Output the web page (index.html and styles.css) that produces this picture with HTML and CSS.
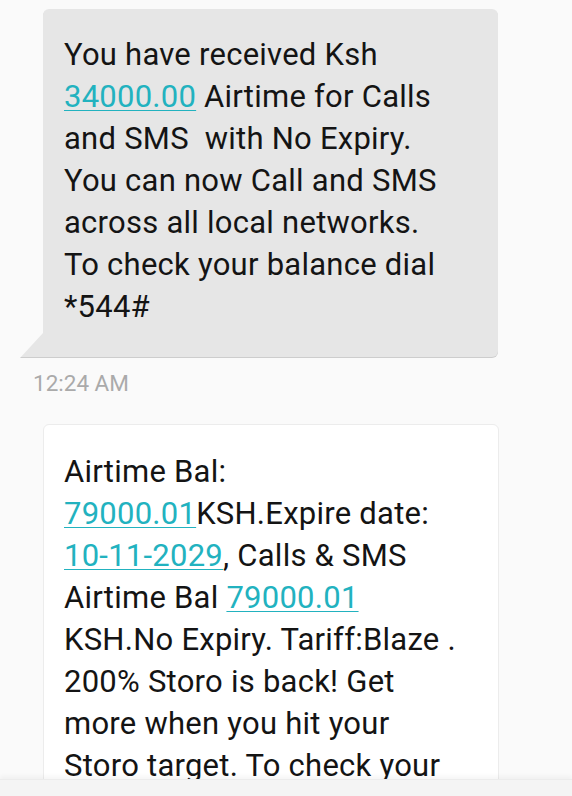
FILE: index.html
```html
<!DOCTYPE html>
<html>
<head>
<meta charset="utf-8">
<link rel="stylesheet" href="styles.css">
</head>
<body>
<div class="screen">
  <div class="thread">
    <div class="bubble bubble-grey">
      <p class="text">You have received Ksh<br><a class="link">34000.00</a> Airtime for Calls<br>and SMS&nbsp; with No Expiry.<br>You can now Call and SMS<br>across all local networks.<br>To check your balance dial<br>*544#</p>
    </div>
    <div class="time">12:24 AM</div>
    <div class="bubble bubble-white">
      <p class="text">Airtime Bal:<br><a class="link">79000.01</a>KSH.Expire date:<br><a class="link">10-11-2029</a>, Calls &amp; SMS<br>Airtime Bal <a class="link">79000.01</a><br>KSH.No Expiry. Tariff:Blaze .<br>200% Storo is back! Get<br>more when you hit your<br>Storo target. To check your<br>balance dial *544#</p>
    </div>
  </div>
  <div class="bar"></div>
</div>
</body>
</html>
```
FILE: styles.css
```css
html, body {
  margin: 0;
  padding: 0;
  background: #fafafa;
}
.screen {
  width: 572px;
  height: 796px;
  display: flex;
  flex-direction: column;
  overflow: hidden;
  font-family: Roboto, "Noto Sans", sans-serif;
}
.thread {
  flex: 1;
  overflow: hidden;
  padding-top: 9px;
  display: flex;
  flex-direction: column;
}
.bubble {
  position: relative;
  margin-left: 43px;
  width: 455px;
  box-sizing: border-box;
  border-radius: 6px;
  flex: none;
}
.bubble-grey {
  background: #e6e6e6;
  border-bottom-left-radius: 0;
  box-shadow: 0 1px 0 #cdcdcd;
  padding: 25px 10px 29px 21px;
}
.bubble-grey::before {
  content: "";
  position: absolute;
  left: -23px;
  bottom: -1px;
  width: 23px;
  height: 25px;
  background: linear-gradient(to top, #cdcdcd 1px, #e6e6e6 1px);
  clip-path: polygon(100% 0, 100% 100%, 0 100%);
}
.bubble-white {
  background: #ffffff;
  border: 1px solid #ececec;
  margin-left: 43px;
  width: 456px;
  padding: 26px 10px 20px 20px;
}
.text {
  margin: 0;
  font-size: 31px;
  line-height: 42px;
  letter-spacing: 0.25px;
  color: #141414;
  white-space: nowrap;
}
.link {
  color: #22b2bf;
  text-decoration: underline;
  text-decoration-thickness: 1px;
  text-underline-offset: 3px;
}
.time {
  margin: 14px 0 29px 33px;
  font-size: 22.5px;
  line-height: 24px;
  color: #aaaaaa;
  flex: none;
}
.bar {
  height: 16px;
  flex: none;
  background: #f4f4f4;
  box-shadow: 0 -3px 4px rgba(0,0,0,0.04);
  border-top: 1px solid #ececec;
  position: relative;
}
```
